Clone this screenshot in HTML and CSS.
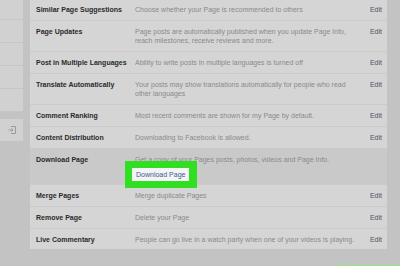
FILE: index.html
```html
<!DOCTYPE html>
<html lang="en">
<head>
  <meta charset="UTF-8" />
  <meta name="viewport" content="width=device-width, initial-scale=1.0" />
  <title>Page Settings</title>
  <link rel="stylesheet" href="styles.css">
</head>
<body>
  <!-- Left menu -->
  <aside class="sidebar">
    <ul class="side-nav">
      <li></li>
      <li></li>
      <li></li>
      <li></li>
      <li></li>
    </ul>
    <div class="side-foot">
      <svg width="8" height="8" viewBox="0 0 8 8" fill="none" stroke="#9a9a9a" stroke-width="1">
        <path d="M3 0.5h4.5v7H3" />
        <path d="M0.5 4h4.5M3.5 2.5L5 4L3.5 5.5" />
      </svg>
    </div>
  </aside>

  <!-- General settings list -->
  <main class="content">
    <section class="settings">
      <div class="row first">
        <div class="label">Similar Page Suggestions</div>
        <div class="desc">Choose whether your Page is recommended to others</div>
        <a class="edit" href="#">Edit</a>
      </div>
      <div class="row">
        <div class="label">Page Updates</div>
        <div class="desc">Page posts are automatically published when you update Page Info, reach milestones, receive reviews and more.</div>
        <a class="edit" href="#">Edit</a>
      </div>
      <div class="row">
        <div class="label">Post in Multiple Languages</div>
        <div class="desc">Ability to write posts in multiple languages is turned off</div>
        <a class="edit" href="#">Edit</a>
      </div>
      <div class="row">
        <div class="label">Translate Automatically</div>
        <div class="desc">Your posts may show translations automatically for people who read other languages</div>
        <a class="edit" href="#">Edit</a>
      </div>
      <div class="row">
        <div class="label">Comment Ranking</div>
        <div class="desc">Most recent comments are shown for my Page by default.</div>
        <a class="edit" href="#">Edit</a>
      </div>
      <div class="row">
        <div class="label">Content Distribution</div>
        <div class="desc">Downloading to Facebook is allowed.</div>
        <a class="edit" href="#">Edit</a>
      </div>
      <div class="row open">
        <div class="label">Download Page</div>
        <div class="desc">
          <p>Get a copy of your Pages posts, photos, videos and Page Info.</p>
          <span class="hl"><button type="button" class="dl-btn">Download Page</button></span>
        </div>
        <span></span>
      </div>
      <div class="row">
        <div class="label">Merge Pages</div>
        <div class="desc">Merge duplicate Pages</div>
        <a class="edit" href="#">Edit</a>
      </div>
      <div class="row">
        <div class="label">Remove Page</div>
        <div class="desc">Delete your Page</div>
        <a class="edit" href="#">Edit</a>
      </div>
      <div class="row">
        <div class="label">Live Commentary</div>
        <div class="desc">People can go live in a watch party when one of your videos is playing.</div>
        <a class="edit" href="#">Edit</a>
      </div>
    </section>
    <div class="corner-mark"></div>
  </main>
</body>
</html>
```

FILE: styles.css
```css
* { box-sizing: border-box; margin: 0; padding: 0; }
body { display: flex; height: 100vh; overflow: hidden; background-color: #c3c3c3; font-family: "Liberation Sans", Arial, sans-serif; font-size: 7px; line-height: 9px; }

/* left menu */
.sidebar { width: 23px; flex-shrink: 0; }
.side-nav { list-style: none; margin-top: -3px; background-color: #d1d1d1; }
.side-nav li { height: 23px; border-bottom: 1px solid #c6c6c6; }
.side-foot { margin-top: 7px; height: 22px; background-color: #d1d1d1; display: flex; align-items: center; justify-content: center; }

/* settings list */
.content { flex: 1; padding-left: 7px; padding-right: 13px; }
.settings { background-color: #d5d5d5; }
.row { display: grid; grid-template-columns: 99px 226px 1fr; padding: 6px 5px 6px 6px; border-bottom: 1px solid #cbcbcb; }
.row.first { padding-top: 5px; }
.row:last-child { border-bottom: none; padding-bottom: 5px; }
.label { font-weight: bold; color: #2a2a2a; }
.desc { color: #8a8a8a; }
.edit { justify-self: end; color: #4d5463; text-decoration: none; }

/* download row */
.row.open { background-color: #c9c9c9; padding-bottom: 2px; }
.hl { display: inline-block; margin: -3px 0 -6px -10px; border: 7px solid #31de22; border-right-width: 8px; position: relative; }
.dl-btn { display: block; font: inherit; line-height: 13px; padding: 0 4px; border: none; background-color: #f4f4f6; color: #3f5a93; }

.corner-mark { margin: 15px -13px 0 auto; width: 62px; height: 4px; background-color: #a9d59e; border-radius: 2px 0 0 0; }
```
